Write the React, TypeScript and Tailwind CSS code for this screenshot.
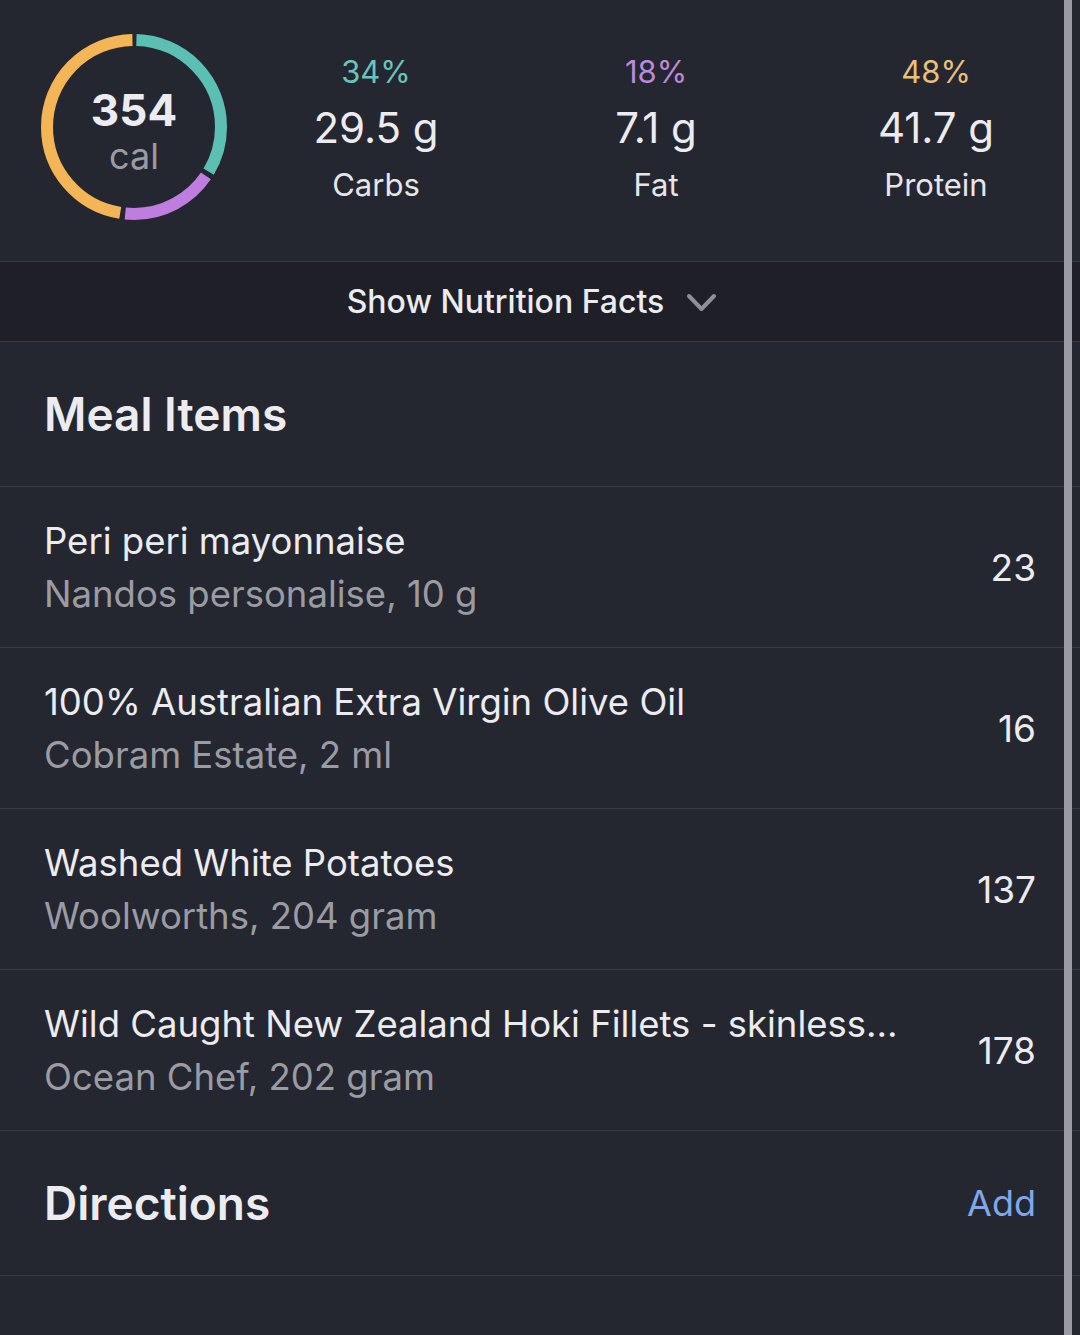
import React from "react";

const R = 87;
const C = 2 * Math.PI * R;

function Ring() {
  const segs = [
    { pct: 0.34, color: "#5cbfb4" },
    { pct: 0.18, color: "#bf7ddf" },
    { pct: 0.48, color: "#f4b556" },
  ];
  const gap = 5;
  let acc = 0;
  return (
    <svg width="186" height="186" viewBox="0 0 186 186" className="block">
      <g transform="rotate(-90 93 93)">
        {segs.map((s, i) => {
          const len = s.pct * C - gap;
          const off = -(acc + gap / 2);
          acc += s.pct * C;
          return (
            <circle
              key={i}
              cx="93"
              cy="93"
              r={R}
              fill="none"
              stroke={s.color}
              strokeWidth="12"
              strokeDasharray={`${len} ${C - len}`}
              strokeDashoffset={off}
            />
          );
        })}
      </g>
    </svg>
  );
}

function Macro({ pct, value, label, color }: { pct: string; value: string; label: string; color: string }) {
  return (
    <div className="flex flex-col items-center">
      <div className={`text-[31px] leading-none ${color}`}>{pct}</div>
      <div className="mt-[20px] text-[42px] leading-none text-[#ececf0]">{value}</div>
      <div className="mt-[20px] text-[31px] leading-none text-[#e6e6ea]">{label}</div>
    </div>
  );
}

function Item({ title, sub, cal }: { title: string; sub: string; cal: string }) {
  return (
    <div className="h-[161px] border-b border-[#393a43] px-[44px] flex items-center justify-between">
      <div className="flex flex-col min-w-0">
        <div className="text-[36.5px] leading-[40px] text-[#ececf0] whitespace-nowrap">{title}</div>
        <div className="mt-[13px] text-[36.5px] leading-[40px] text-[#9a9ba3] whitespace-nowrap">{sub}</div>
      </div>
      <div className="text-[37px] leading-none text-[#ececf0]">{cal}</div>
    </div>
  );
}

export default function App() {
  return (
    <div
      className="relative w-[1080px] h-[1335px] overflow-hidden bg-[#252730]"
      style={{ fontFamily: "Inter, 'Noto Sans', sans-serif" }}
    >
      {/* Summary */}
      <div className="h-[262px] border-b border-[#393a43] flex items-start pl-[41px] pt-[34px]">
        <div className="relative w-[186px] h-[186px]">
          <Ring />
          <div className="absolute inset-0 flex flex-col items-center justify-center">
            <div className="text-[44px] leading-none font-bold text-[#ececf0] mt-[8px]">354</div>
            <div className="text-[36px] leading-none text-[#9a9ba3] mt-[6px]">cal</div>
          </div>
        </div>
        <div className="ml-[9px] grid grid-cols-3 w-[840px] mt-[22px]">
          <Macro pct="34%" value="29.5 g" label="Carbs" color="text-[#68c5bb]" />
          <Macro pct="18%" value="7.1 g" label="Fat" color="text-[#b98bd8]" />
          <Macro pct="48%" value="41.7 g" label="Protein" color="text-[#e9c07c]" />
        </div>
      </div>

      {/* Show nutrition facts */}
      <div className="h-[80px] bg-[#1e1f27] border-b border-[#393a43] flex items-center justify-center gap-[22px] pr-[16px]">
        <span className="text-[32px] leading-none font-medium text-[#ececf0]">Show Nutrition Facts</span>
        <svg width="31" height="20" viewBox="0 0 31 20" className="mt-[2px]">
          <path d="M3 3 L15.5 16 L28 3" fill="none" stroke="#8e8f98" strokeWidth="4" strokeLinecap="round" strokeLinejoin="round" />
        </svg>
      </div>

      {/* Meal Items */}
      <div className="h-[145px] border-b border-[#393a43] px-[44px] flex items-center">
        <h2 className="text-[46px] leading-none font-semibold text-[#ececf0]">Meal Items</h2>
      </div>

      <Item title="Peri peri mayonnaise" sub="Nandos personalise, 10 g" cal="23" />
      <Item title="100% Australian Extra Virgin Olive Oil" sub="Cobram Estate, 2 ml" cal="16" />
      <Item title="Washed White Potatoes" sub="Woolworths, 204 gram" cal="137" />
      <Item title="Wild Caught New Zealand Hoki Fillets - skinless…" sub="Ocean Chef, 202 gram" cal="178" />

      {/* Directions */}
      <div className="h-[145px] border-b border-[#393a43] px-[44px] flex items-center justify-between">
        <h2 className="text-[46px] leading-none font-semibold text-[#ececf0]">Directions</h2>
        <span className="text-[36px] leading-none text-[#7ea8ea]">Add</span>
      </div>

      {/* Scroll indicator */}
      <div className="absolute top-0 bottom-0 left-[1064px] w-[8px] bg-[#9a9aa3]" />
    </div>
  );
}
